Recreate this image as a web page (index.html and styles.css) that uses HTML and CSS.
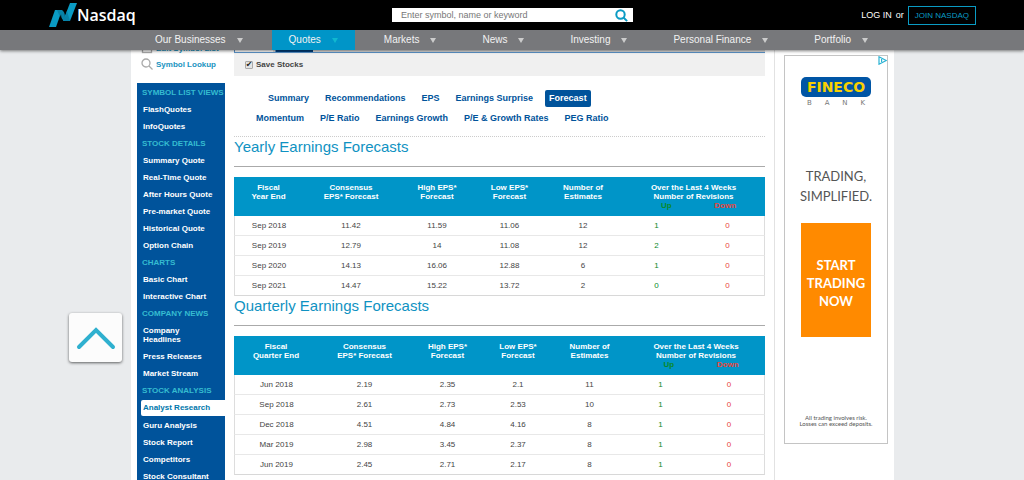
FILE: index.html
```html
<!DOCTYPE html>
<html lang="en">
<head>
<meta charset="utf-8">
<title>Nasdaq - Earnings Forecasts</title>
<link rel="stylesheet" href="styles.css">
</head>
<body>
<header class="site-header">
  <div class="topbar">
    <a class="brand" href="#">
      <svg class="brand-mark" viewBox="0 0 28 24" aria-hidden="true">
        <path fill="#0a9bc4" d="M6 7h7l-6 17H0z"/>
        <path fill="#0a9bc4" d="M21 0h7l-7 18h-7z"/>
        <path fill="#0782a8" d="M8 7h5q3 2 3 7l2-6 3 10h-5q-4-1-4-7l-1 3z"/>
      </svg>
      <span>Nasdaq</span>
    </a>
    <form class="search" role="search">
      <input type="text" aria-label="Search" placeholder="Enter symbol, name or keyword">
      <button type="button" aria-label="Search">
        <svg viewBox="0 0 13 13" aria-hidden="true"><circle cx="5.5" cy="5.5" r="4.2"/><path d="M8.5 8.5l3.6 3.6"/></svg>
      </button>
    </form>
    <div class="account"><a href="#">LOG IN</a><span>or</span><a class="join" href="#">JOIN NASDAQ</a></div>
  </div>
  <nav class="mainnav" aria-label="Main">
    <a href="#">Our Businesses</a>
    <a class="current" href="#">Quotes</a>
    <a href="#">Markets</a>
    <a href="#">News</a>
    <a href="#">Investing</a>
    <a href="#">Personal Finance</a>
    <a href="#">Portfolio</a>
  </nav>
</header>

<div class="scroller">
<div class="page">
  <aside class="side">
    <div class="tools">
      <a href="#"><svg viewBox="0 0 12 12" aria-hidden="true"><rect x="1.5" y="1.5" width="9" height="9"/></svg>Edit Symbol List</a>
      <a href="#"><svg viewBox="0 0 12 12" aria-hidden="true"><circle cx="5" cy="5" r="4"/><path d="M8 8l3.5 3.5"/></svg>Symbol Lookup</a>
    </div>
    <nav class="sidenav" aria-label="Quotes">
      <h3>SYMBOL LIST VIEWS</h3>
      <a href="#">FlashQuotes</a>
      <a href="#">InfoQuotes</a>
      <h3>STOCK DETAILS</h3>
      <a href="#">Summary Quote</a>
      <a href="#">Real-Time Quote</a>
      <a href="#">After Hours Quote</a>
      <a href="#">Pre-market Quote</a>
      <a href="#">Historical Quote</a>
      <a href="#">Option Chain</a>
      <h3>CHARTS</h3>
      <a href="#">Basic Chart</a>
      <a href="#">Interactive Chart</a>
      <h3>COMPANY NEWS</h3>
      <a href="#">Company<br>Headlines</a>
      <a href="#">Press Releases</a>
      <a href="#">Market Stream</a>
      <h3>STOCK ANALYSIS</h3>
      <a class="current" href="#">Analyst Research</a>
      <a href="#">Guru Analysis</a>
      <a href="#">Stock Report</a>
      <a href="#">Competitors</a>
      <a href="#">Stock Consultant</a>
    </nav>
  </aside>

  <main class="content">
    <div class="symbol-tabs"><i></i><i class="on"></i></div>
    <div class="savebar"><input type="checkbox" id="save" checked><label for="save">Save Stocks</label></div>
    <nav class="subtabs" aria-label="Analyst research">
      <div class="row first">
        <a href="#">Summary</a><a href="#">Recommendations</a><a href="#">EPS</a><a href="#">Earnings Surprise</a><a class="current" href="#">Forecast</a>
      </div>
      <div class="row second">
        <a href="#">Momentum</a><a href="#">P/E Ratio</a><a href="#">Earnings Growth</a><a href="#">P/E &amp; Growth Rates</a><a href="#">PEG Ratio</a>
      </div>
    </nav>

    <h2>Yearly Earnings Forecasts</h2>
    <table class="yearly">
      <colgroup><col class="c1"><col class="c2"><col class="c3"><col class="c4"><col class="c5"><col class="c6"><col class="c7"></colgroup>
      <thead><tr>
        <th>Fiscal<br>Year End</th><th>Consensus<br>EPS* Forecast</th><th>High EPS*<br>Forecast</th><th>Low EPS*<br>Forecast</th><th>Number of<br>Estimates</th>
        <th colspan="2"><div class="revisions">Over the Last 4 Weeks<br>Number of Revisions<div class="updown"><span class="up">Up</span><span class="down">Down</span></div></div></th>
      </tr></thead>
      <tbody>
        <tr><td>Sep 2018</td><td>11.42</td><td>11.59</td><td>11.06</td><td>12</td><td class="up">1</td><td class="down">0</td></tr>
        <tr><td>Sep 2019</td><td>12.79</td><td>14</td><td>11.08</td><td>12</td><td class="up">2</td><td class="down">0</td></tr>
        <tr><td>Sep 2020</td><td>14.13</td><td>16.06</td><td>12.88</td><td>6</td><td class="up">1</td><td class="down">0</td></tr>
        <tr><td>Sep 2021</td><td>14.47</td><td>15.22</td><td>13.72</td><td>2</td><td class="up">0</td><td class="down">0</td></tr>
      </tbody>
    </table>

    <h2>Quarterly Earnings Forecasts</h2>
    <table class="quarterly">
      <colgroup><col class="c1"><col class="c2"><col class="c3"><col class="c4"><col class="c5"><col class="c6"><col class="c7"></colgroup>
      <thead><tr>
        <th>Fiscal<br>Quarter End</th><th>Consensus<br>EPS* Forecast</th><th>High EPS*<br>Forecast</th><th>Low EPS*<br>Forecast</th><th>Number of<br>Estimates</th>
        <th colspan="2"><div class="revisions">Over the Last 4 Weeks<br>Number of Revisions<div class="updown"><span class="up">Up</span><span class="down">Down</span></div></div></th>
      </tr></thead>
      <tbody>
        <tr><td>Jun 2018</td><td>2.19</td><td>2.35</td><td>2.1</td><td>11</td><td class="up">1</td><td class="down">0</td></tr>
        <tr><td>Sep 2018</td><td>2.61</td><td>2.73</td><td>2.53</td><td>10</td><td class="up">1</td><td class="down">0</td></tr>
        <tr><td>Dec 2018</td><td>4.51</td><td>4.84</td><td>4.16</td><td>8</td><td class="up">1</td><td class="down">0</td></tr>
        <tr><td>Mar 2019</td><td>2.98</td><td>3.45</td><td>2.37</td><td>8</td><td class="up">1</td><td class="down">0</td></tr>
        <tr><td>Jun 2019</td><td>2.45</td><td>2.71</td><td>2.17</td><td>8</td><td class="up">1</td><td class="down">0</td></tr>
      </tbody>
    </table>
  </main>

  <aside class="rail">
    <div class="ad">
      <a class="adchoices" href="#" aria-label="AdChoices"><svg viewBox="0 0 9 9" aria-hidden="true"><path d="M1 .8v7.4L8.2 4.5z"/><path d="M3.6 3v3"/></svg></a>
      <div class="fineco">FINECO</div>
      <div class="bank"><span>B</span><span>A</span><span>N</span><span>K</span></div>
      <p class="slogan">TRADING,<br>SIMPLIFIED.</p>
      <a class="cta" href="#">START<br>TRADING<br>NOW</a>
      <p class="risk">All trading involves risk.<br>Losses can exceed deposits.</p>
    </div>
  </aside>
</div>
</div>

<button class="to-top" type="button" aria-label="Back to top">
  <svg viewBox="0 0 40 24" aria-hidden="true"><path d="M3 21L20 4l17 17"/></svg>
</button>
</body>
</html>
```
FILE: styles.css
```css
* { box-sizing: border-box; }
body {
  margin: 0;
  height: 100vh;
  display: flex;
  flex-direction: column;
  overflow: hidden;
  background: #e9ebed;
  font-family: "Liberation Sans", Arial, sans-serif;
  font-size: 8px;
  line-height: 9px;
  color: #444;
}
a { color: inherit; text-decoration: none; }
h2, h3, p { margin: 0; }

.site-header { z-index: 2; box-shadow: 0 1px 3px rgba(0, 0, 0, .5); }
.topbar {
  display: grid;
  grid-template-columns: 1fr 241px 1fr;
  align-items: center;
  height: 30px;
  padding: 0 48px 0 49px;
  background: #000;
  color: #fff;
}
.brand {
  display: flex;
  align-items: center;
  font: 600 16px/24px "Open Sans", sans-serif;
}
.brand-mark { width: 28px; height: 24px; }
.search { display: flex; height: 14px; background: #fff; }
.search input {
  flex: 1;
  min-width: 0;
  border: 0;
  padding: 0 9px;
  background: none;
  font: 9px/14px "Liberation Sans", Arial, sans-serif;
  color: #444;
}
.search input::placeholder { color: #777; }
.search button { display: flex; align-items: center; border: 0; padding: 0 5px; background: none; }
.search svg { width: 13px; height: 13px; fill: none; stroke: #0a9bc4; stroke-width: 2; }
.account { display: flex; justify-content: flex-end; align-items: center; gap: 4px; font-size: 9px; }
.account .join { border: 1px solid #0a9bc4; padding: 4px 6px; font-size: 8px; line-height: 9px; color: #0a9bc4; }

.mainnav {
  display: flex;
  justify-content: space-between;
  height: 20px;
  padding: 0 139px 0 138px;
  background: #77787b;
  color: #f2f2f2;
  font-size: 10px;
  line-height: 20px;
}
.mainnav a { display: flex; align-items: center; gap: 11px; padding: 0 17px; }
.mainnav a::after {
  content: "";
  border: 3px solid transparent;
  border-top: 5px solid #ccc;
  border-bottom: 0;
}
.mainnav .current { background: #0095c8; }
.mainnav .current::after { border-top-color: #10b8d0; }

.scroller { flex: 1; min-height: 0; overflow: hidden; }
.page {
  display: flex;
  gap: 9px;
  min-height: 100%;
  margin: 0 130px 0 131px;
  padding: 0 6px;
  background: #fff;
}

.side { flex: none; width: 88px; }
.tools { margin-top: -10px; padding-left: 4px; color: #1a93c0; font-weight: bold; }
.tools a { display: flex; align-items: center; gap: 3px; height: 16px; }
.tools svg { width: 12px; height: 12px; fill: none; stroke: #aaa; stroke-width: 1.3; }
.sidenav { margin-top: 11px; padding: 1px 0 0 4px; background: #00539b; color: #fff; font-weight: bold; }
.sidenav h3 { padding: 4px 1px; font-size: 8px; color: #35bcd0; white-space: nowrap; }
.sidenav a { display: block; padding: 4px 2px; }
.sidenav .current { margin: 1px 0; background: #fff; color: #0077ab; border-radius: 2px 0 0 2px; line-height: 8px; }

.content { flex: 1; min-width: 0; }
.symbol-tabs { display: flex; gap: 2px; height: 3px; background: #ddd; border-bottom: 1px solid #5b93c8; }
.symbol-tabs i { width: 39px; border-left: 1px solid #5b93c8; background: #fff; }
.symbol-tabs .on { width: 38px; background: #00407f; }
.savebar {
  display: flex;
  align-items: center;
  gap: 3px;
  height: 23px;
  padding-left: 11px;
  background: #f0f0f0;
  font-weight: bold;
}
.savebar input {
  appearance: none;
  display: flex;
  align-items: center;
  justify-content: center;
  width: 8px;
  height: 8px;
  margin: 0;
  border: 1px solid #aaa;
  border-radius: 1px;
  background: #e4e4e4;
}
.savebar input:checked::after { content: "✔"; font: 8px/8px "DejaVu Sans", sans-serif; color: #222; }
.subtabs { padding: 14px 0 9px; border-bottom: 1px dotted #ccc; font-size: 9px; line-height: 17px; font-weight: bold; color: #00539b; }
.subtabs .row { display: flex; gap: 8px; padding-left: 30px; }
.subtabs .second { margin-top: 3px; padding-left: 18px; }
.subtabs a { padding: 0 4px; border-radius: 2px; }
.subtabs .current { background: #00539b; color: #fff; }

h2 {
  margin-bottom: 10px;
  padding-bottom: 9px;
  border-bottom: 1px solid #aaa;
  font-size: 15px;
  line-height: 20px;
  font-weight: normal;
  color: #0f92c2;
}
table { width: 100%; table-layout: fixed; border-collapse: separate; border-spacing: 0; text-align: center; }
th { height: 39px; padding: 6px 0; background: #0095c8; color: #fff; vertical-align: top; }
td { height: 20px; padding: 0; border-bottom: 1px solid #e8e8e8; }
tr:last-child td { border-bottom-color: #d8d8d8; }
td:first-child { border-left: 1px solid #ddd; }
td:last-child { border-right: 1px solid #ddd; }
.revisions { display: inline-block; vertical-align: top; }
.updown { display: flex; justify-content: space-between; padding-left: 10px; }
.up { color: #0a8a2a; }
.down { color: #e8453c; }
.yearly .c1 { width: 69px; }
.yearly .c2 { width: 96px; }
.yearly .c3 { width: 76px; }
.yearly .c4 { width: 69px; }
.yearly .c5 { width: 78px; }
.yearly .c6 { width: 69px; }
.yearly .c7 { width: 74px; }
.quarterly .c1 { width: 84px; }
.quarterly .c2 { width: 93px; }
.quarterly .c3 { width: 73px; }
.quarterly .c4 { width: 68px; }
.quarterly .c5 { width: 75px; }
.quarterly .c6 { width: 67px; }
.quarterly .c7 { width: 71px; }

.rail { flex: none; width: 114px; padding: 5px 0 0 9px; border-left: 1px solid #e2e2e2; }
.ad {
  position: relative;
  display: flex;
  flex-direction: column;
  align-items: center;
  width: 104px;
  height: 389px;
  padding-top: 21px;
  border: 1px solid #c4c4c4;
  text-align: center;
  font-family: Lato, sans-serif;
}
.adchoices { position: absolute; top: 0; right: 0; display: flex; background: #fff; }
.adchoices svg { width: 9px; height: 9px; fill: none; stroke: #2bb3d4; stroke-width: 1.2; }
.fineco {
  width: 70px;
  border-radius: 5px;
  background: #0055a5;
  color: #f8d000;
  font: bold 14px/20px "DejaVu Sans", sans-serif;
}
.bank { display: flex; justify-content: space-between; width: 58px; margin-top: 2px; font: 7px/9px "DejaVu Sans", sans-serif; color: #777; }
.slogan { margin-top: 58px; font-size: 13px; line-height: 20px; font-weight: 400; color: #555; }
.cta { width: 70px; margin-top: 17px; padding: 33px 0 27px; background: #ff8a00; color: #fff; font-size: 13px; line-height: 18px; font-weight: bold; }
.risk { margin-top: 78px; font-size: 6px; line-height: 6px; color: #555; white-space: nowrap; }

.to-top {
  position: fixed;
  left: 69px;
  bottom: 118px;
  display: flex;
  align-items: center;
  justify-content: center;
  width: 53px;
  height: 49px;
  padding: 0;
  border: 0;
  border-radius: 3px;
  background: #fcfcfc;
  box-shadow: 0 1px 3px rgba(0, 0, 0, .6);
}
.to-top svg { width: 40px; height: 24px; fill: none; stroke: #2fb0cf; stroke-width: 4; stroke-linecap: round; }
```
